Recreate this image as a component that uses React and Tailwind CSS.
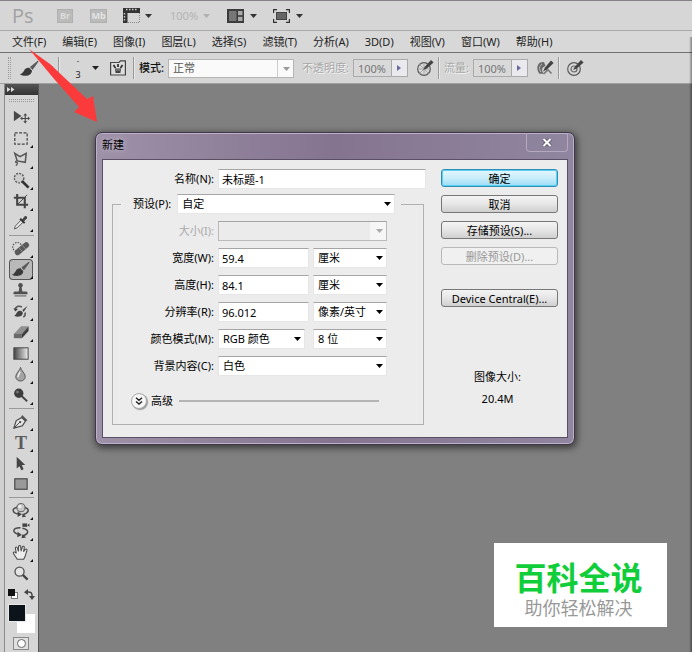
import { useState } from "react";

const menus = [
  "文件(F)", "编辑(E)", "图像(I)", "图层(L)", "选择(S)", "滤镜(T)",
  "分析(A)", "3D(D)", "视图(V)", "窗口(W)", "帮助(H)",
];

// Brush drawing, used in the options bar and the tool panel
const BrushShape = () => (
  <g>
    <path d="M19 1.5 L11 8 L13.5 11 L19.4 2.8 Z" fill="#5a5a5a" />
    <path d="M1 15.5 C3.5 14.5 4.5 12.8 5.5 10.8 C7 8.4 11 8 12.6 10.2 C13.8 12.6 12 15.4 9 16.4 C6.2 17.2 3.4 16.7 1 15.5 Z" fill="#3a3a3a" />
    <path d="M10.5 8.8 L13.4 11.4" stroke="#ddd" strokeWidth="1" />
  </g>
);

// Tool panel, grouped the way the separators split it
const toolGroups = [
  [
    {
      name: "移动工具", flyout: false,
      art: (
        <g>
          <path d="M3 3 L11 8.5 L3 14 Z" fill="#484848" />
          <path d="M15 7 v8 M11 11 h8" stroke="#484848" strokeWidth="1.2" />
          <path d="M15 5.6 l-2 2.4 h4 z M15 16.4 l-2 -2.4 h4 z M9.6 11 l2.4 -2 v4 z M20 11 l-2.2 -2 v4 z" fill="#484848" />
        </g>
      ),
    },
    {
      name: "选框工具", flyout: true,
      art: <rect x="4" y="4" width="13" height="12" fill="none" stroke="#444" strokeWidth="1.3" strokeDasharray="3 1.6" />,
    },
    {
      name: "套索工具", flyout: true,
      art: (
        <g fill="none" stroke="#555" strokeWidth="1.6">
          <path d="M4 3.5 L9.5 7 L16 3.5 L15 13 L6.5 11.5 Z" />
          <path d="M6.5 11.5 C4 11.5 4.5 14 6.5 13.2 C7.5 13.8 6.5 15.6 5 16.5" strokeWidth="1.2" />
        </g>
      ),
    },
    {
      name: "快速选择工具", flyout: true,
      art: (
        <g>
          <circle cx="8.5" cy="7.5" r="5" fill="#ccc" stroke="#555" strokeWidth="1.4" strokeDasharray="2 1.3" />
          <path d="M11.5 10.5 L18.5 17.5" stroke="#333" strokeWidth="2.8" />
        </g>
      ),
    },
    {
      name: "裁剪工具", flyout: true,
      art: (
        <g fill="none" stroke="#444">
          <path d="M6.5 2 V13.5 H18 M3 6 H14.5 V17" strokeWidth="2.2" />
          <path d="M7 13 L17 3" strokeWidth="1" />
        </g>
      ),
    },
    {
      name: "吸管工具", flyout: true,
      art: (
        <g>
          <path d="M10.5 7.5 L4.5 13.8 L3.5 16.8 L6.5 15.6 L12.8 9.6" fill="#e8e8e8" stroke="#555" strokeWidth="1" />
          <path d="M9.6 6 L14.4 10.6" stroke="#333" strokeWidth="2" />
          <path d="M11.5 7 L14.2 3.6 C15.5 2.2 17.8 4.2 16.6 5.8 L13.6 9 Z" fill="#444" />
        </g>
      ),
    },
  ],
  [
    {
      name: "修复画笔", flyout: true,
      art: (
        <g>
          <circle cx="6.6" cy="8.5" r="4.8" fill="none" stroke="#444" strokeWidth="1.1" strokeDasharray="1.6 1.2" />
          <path d="M7 14 L16 6.4" stroke="#5a5a5a" strokeWidth="6" strokeLinecap="round" />
          <path d="M8.6 9.6 L12.2 13.4 M12 6.8 L15.4 10.6" stroke="#a0a0a0" strokeWidth="0.8" />
        </g>
      ),
    },
    { name: "画笔工具", flyout: true, art: <BrushShape /> },
    {
      name: "仿制图章", flyout: true,
      art: (
        <g fill="#505050">
          <circle cx="10" cy="4.6" r="2.4" />
          <path d="M9 6 h2 l1 5 h4 q1.4 0 1.4 1.6 v1.4 h-14.8 v-1.4 q0 -1.6 1.4 -1.6 h4 z" />
          <rect x="3.8" y="15" width="12.4" height="1.4" fill="#777" />
        </g>
      ),
    },
    {
      name: "历史记录画笔", flyout: true,
      art: (
        <g>
          <path d="M17.5 4 L12 8.5 L13.3 10.5 Z" fill="#444" />
          <path d="M3.5 14.5 C5.5 14 6 9.5 9 9.3 C12 9 13.5 12 11.5 14 C9.5 16 5.5 15.8 3.5 14.5 Z" fill="#444" />
          <path d="M4.5 8.5 C4.5 4.6 8.5 3.4 11.5 5.4 M14.8 11 C15.4 13.5 14.5 15 13 16" fill="none" stroke="#555" strokeWidth="1.6" />
          <path d="M2.5 6.5 l2 3.5 l3 -2.6 z" fill="#444" />
        </g>
      ),
    },
    {
      name: "橡皮擦", flyout: true,
      art: (
        <g>
          <path d="M10.5 3.5 H18.5 L11.5 11.5 H3 Z" fill="#909090" />
          <path d="M3 11.5 H11.5 V16 H3 Z" fill="#6a6a6a" />
          <path d="M11.5 11.5 L18.5 3.5 V8.5 L11.5 16 Z" fill="#404040" />
        </g>
      ),
    },
    {
      name: "渐变工具", flyout: true,
      art: (
        <g>
          <defs>
            <linearGradient id="grad-tool">
              <stop offset="0" stopColor="#444" />
              <stop offset="1" stopColor="#eee" />
            </linearGradient>
          </defs>
          <rect x="3" y="4" width="15" height="12" fill="url(#grad-tool)" stroke="#444" />
        </g>
      ),
    },
    {
      name: "模糊工具", flyout: true,
      art: (
        <g>
          <path d="M10 2.5 C10.5 6 15 8.5 15 12.3 A5 4.6 0 0 1 5 12.3 C5 8.5 9.5 6 10 2.5 Z" fill="#a4a4a4" stroke="#555" strokeWidth="1" />
          <path d="M9.5 7 C9 9.5 7.2 10.5 7.4 13" fill="none" stroke="#eee" strokeWidth="1.6" />
        </g>
      ),
    },
    {
      name: "减淡工具", flyout: true,
      art: (
        <g>
          <path d="M10 9.5 L17 16" stroke="#444" strokeWidth="2" />
          <circle cx="8.2" cy="7.6" r="4.9" fill="#3e3e3e" />
          <circle cx="6.8" cy="6.4" r="1.5" fill="#777" />
        </g>
      ),
    },
  ],
  [
    {
      name: "钢笔工具", flyout: true,
      art: (
        <g>
          <path d="M3 17 L5.5 9 L11.5 5.8 L15.2 9.6 L12 14.6 Z" fill="#e4e4e4" stroke="#444" strokeWidth="1.2" />
          <path d="M3.5 16.5 L9 11" stroke="#444" strokeWidth="1" />
          <circle cx="9.6" cy="10.6" r="1.2" fill="#444" />
          <path d="M11.8 3.2 L17.4 8.6 L15.4 10 L10.6 5.2 Z" fill="#555" />
        </g>
      ),
    },
    {
      name: "文字工具", flyout: true,
      art: <text x="10.5" y="16.5" textAnchor="middle" fontFamily="Liberation Serif, serif" fontWeight="bold" fontSize="19" fill="#5c5c5c">T</text>,
    },
    {
      name: "路径选择工具", flyout: true,
      art: <path d="M6 3 L15 11.5 L11.3 11.7 L13.3 16 L10.8 17 L9 12.8 L6 15.2 Z" fill="#444" />,
    },
    {
      name: "矩形工具", flyout: true,
      art: <rect x="4" y="4" width="13" height="11" fill="#999" stroke="#444" strokeWidth="1.2" />,
    },
  ],
  [
    {
      name: "3D 旋转工具", flyout: true,
      art: (
        <g>
          <path d="M6.5 6.5 C0 8 1.5 13 8 13.6 M14 6.5 C20.5 8.5 18.5 12.5 13 14.2" fill="none" stroke="#4c4c4c" strokeWidth="1.6" />
          <circle cx="10.5" cy="7" r="4.3" fill="#c8c8c8" stroke="#555" strokeWidth="1" />
          <circle cx="9.4" cy="5.8" r="1.6" fill="#f2f2f2" />
          <path d="M7 11 L11.5 14 L7 16.8 Z M12 13 L16 16.5 L11.8 17.2 Z" fill="#444" />
        </g>
      ),
    },
    {
      name: "3D 相机工具", flyout: true,
      art: (
        <g>
          <rect x="12" y="1.5" width="5" height="3.6" fill="#444" />
          <path d="M17 3.3 l2.5 -1.6 v3.4 z" fill="#444" />
          <path d="M10 6 C2.5 5.5 0 10.5 7.5 13 M12 6.5 C20 8 18.5 12.6 12.5 14.5" fill="none" stroke="#4c4c4c" strokeWidth="1.6" />
          <path d="M7 10.2 L11.5 13.7 L6.6 16 Z M12 12.8 L16 16.2 L11 17 Z" fill="#444" />
        </g>
      ),
    },
    {
      name: "抓手工具", flyout: true,
      art: (
        <path
          d="M6.5 17 C5 14.5 2.6 12 2.4 10.4 C2.6 9 4.2 9.2 5.6 11 L4.6 5.4 C4.6 3.8 6.4 3.8 6.8 5.4 L7.8 8.8 L8 3.6 C8.2 2.2 10 2.2 10.2 3.6 L10.6 8.6 L12 4.2 C12.6 3 14.2 3.4 14 4.8 L13.2 9.2 L15 6.8 C16 5.8 17.2 6.6 16.8 7.8 C15.8 10 15.6 14 13.4 17 Z"
          fill="#ececec" stroke="#4c4c4c" strokeWidth="1.1"
        />
      ),
    },
    {
      name: "缩放工具", flyout: false,
      art: (
        <g>
          <circle cx="9" cy="8" r="4.8" fill="#e4e4e4" stroke="#555" strokeWidth="1.4" />
          <path d="M12.4 11.5 L17.5 16.5" stroke="#444" strokeWidth="2.4" />
        </g>
      ),
    },
  ],
];

const Caret = ({ className = "" }) => (
  <svg viewBox="0 0 7 4" className={`w-[7px] h-1 ${className}`} aria-hidden="true">
    <path d="M0 0 H7 L3.5 4 Z" fill="currentColor" />
  </svg>
);

const Divider = () => <span className="w-px h-[22px] bg-[#999] border-r border-[#e8e8e8] box-content" />;

// Target with a stylus, the tablet pressure buttons
const PressureIcon = ({ grid }) => (
  <svg viewBox="0 0 18 18" className="w-[18px] h-[18px]" aria-hidden="true">
    <circle cx="8" cy="10" r="6.3" fill="#d8d8d8" stroke="#5a5a5a" strokeWidth="1.2" />
    {grid ? (
      <path d="M3.5 5.5 L12.5 14.5 M3.5 14.5 L11 7 M8 4 V16 M2 10 H14" stroke="#aaa" strokeWidth="1" />
    ) : (
      <circle cx="8" cy="10" r="3" fill="none" stroke="#666" strokeWidth="1.2" />
    )}
    <path d="M7 11 L9 7.5 L15 1 L17.6 3.4 L10.8 9.4 Z" fill="#444" />
  </svg>
);

const PercentField = ({ id, label }) => (
  <div className="flex items-center">
    <label htmlFor={id} className="text-[#a9a9a9] whitespace-nowrap [text-shadow:1px_1px_0_#f4f4f4]">{label}</label>
    <input id={id} defaultValue="100%" disabled className="ml-1 w-[39px] h-[18px] pl-1 border border-[#aaa] bg-[#d9d9d9] text-[#777]" />
    <button type="button" aria-label={label} className="w-4 h-[18px] flex items-center justify-center border border-l-0 border-[#aaa] bg-[#e9e9ee]">
      <svg viewBox="0 0 4 6" className="w-1 h-1.5"><path d="M0 0 L4 3 L0 6 Z" fill="#6a6aa0" /></svg>
    </button>
  </div>
);

// Drop-down of the dialog, with its own black arrow
const Dropdown = ({ id, label, options, className, disabled }) => (
  <div className={`relative ${className}`}>
    <select
      id={id}
      aria-label={label}
      disabled={disabled}
      className={`block w-full h-5 pl-1 appearance-none border border-t-[#a5a5a5] ${
        disabled ? "bg-[#ebebeb] border-[#bbb] opacity-100" : "bg-white border-[#e6e6e6]"
      }`}
    >
      {options.map((option) => (
        <option key={option}>{option}</option>
      ))}
    </select>
    {disabled && <span className="absolute right-px top-px w-4 h-[18px] bg-[#f6f6f6]" />}
    <Caret className={`absolute right-1 top-2 pointer-events-none ${disabled ? "text-[#aaa]" : "text-black"}`} />
  </div>
);

const Row = ({ id, label, muted, children }) => (
  <div className="flex items-center h-5">
    <label htmlFor={id} className={`w-[102px] mr-1 text-right whitespace-nowrap ${muted ? "text-[#aaa]" : ""}`}>{label}</label>
    {children}
  </div>
);

const inputStyle = "h-5 px-[3px] bg-white border border-[#e6e6e6] border-t-[#a5a5a5]";

const DialogButton = ({ children, primary, disabled, className = "" }) => {
  let look = "border-[#777] bg-linear-to-b from-[#f4f4f4] via-[#e6e6e6] to-[#cfcfcf]";
  if (primary) look = "border-[#2d8fb8] bg-linear-to-b from-[#e6f7fe] via-[#c9edfb] to-[#9bdcf6] shadow-[inset_0_0_0_1px_#5cd0f2]";
  if (disabled) look = "border-[#b9b9b9] bg-[#f0f0f0] text-[#999]";
  return (
    <button type="button" disabled={disabled} className={`h-[18px] rounded-[3px] border leading-none ${look} ${className}`}>
      {children}
    </button>
  );
};

const NewDocumentDialog = () => {
  const [name, setName] = useState("未标题-1");
  const [width, setWidth] = useState("59.4");
  const [height, setHeight] = useState("84.1");
  const [resolution, setResolution] = useState("96.012");

  return (
    <section
      role="dialog"
      aria-labelledby="dialog-title"
      className="absolute left-14 top-12 w-[480px] px-1.5 pb-1.5 rounded-[7px] border border-[#40384a] bg-[#85769a] bg-linear-to-r from-[#9d91a8] via-[#857490] to-[#9086a0] shadow-[inset_0_0_0_1px_#bdb1c7,1px_2px_7px_1px_rgba(0,0,0,0.55)] text-[11px] text-black"
    >
      {/* Title bar */}
      <header className="flex justify-between h-[26px]">
        <h2 id="dialog-title" className="pt-1 leading-4 [text-shadow:0_0_6px_#d8d0e0]">新建</h2>
        <button type="button" aria-label="关闭" className="w-[42px] h-[19px] flex items-center justify-center rounded-b border border-t-0 border-[#b3a8bd]">
          <svg viewBox="0 0 10 9" className="w-2.5 h-[9px]">
            <path d="M1.5 1 L8.5 8 M8.5 1 L1.5 8" stroke="#5c5168" strokeWidth="3.6" />
            <path d="M1.5 1 L8.5 8 M8.5 1 L1.5 8" stroke="#fff" strokeWidth="2" />
          </svg>
        </button>
      </header>

      <form className="flex justify-between px-[9px] pt-[9px] pb-3 border border-[#5b4f66] bg-[#ececec]">
        <div className="w-[314px]">
          <Row id="doc-name" label="名称(N):">
            <input id="doc-name" value={name} onChange={(e) => setName(e.target.value)} className={`w-[208px] ${inputStyle}`} />
          </Row>

          {/* Preset group */}
          <fieldset className="mt-[5px] w-[312px] min-w-0 border border-[#b0b0b0]">
            <legend className="ml-2 flex items-center pl-3 pr-1.5">
              <label htmlFor="preset" className="mr-1.5 whitespace-nowrap">预设(P):</label>
              <Dropdown id="preset" label="预设" options={["自定"]} className="w-[218px]" />
            </legend>

            <div className="-ml-px mt-[7px] flex flex-col gap-[7px]">
              <Row id="size" label="大小(I):" muted>
                <Dropdown id="size" label="大小" options={[""]} className="w-[169px]" disabled />
              </Row>
              <Row id="width" label="宽度(W):">
                <input id="width" value={width} onChange={(e) => setWidth(e.target.value)} className={`w-[91px] mr-1 ${inputStyle}`} />
                <Dropdown id="width-unit" label="宽度单位" options={["厘米", "像素"]} className="w-[74px]" />
              </Row>
              <Row id="height" label="高度(H):">
                <input id="height" value={height} onChange={(e) => setHeight(e.target.value)} className={`w-[91px] mr-1 ${inputStyle}`} />
                <Dropdown id="height-unit" label="高度单位" options={["厘米", "像素"]} className="w-[74px]" />
              </Row>
              <Row id="resolution" label="分辨率(R):">
                <input id="resolution" value={resolution} onChange={(e) => setResolution(e.target.value)} className={`w-[91px] mr-1 ${inputStyle}`} />
                <Dropdown id="resolution-unit" label="分辨率单位" options={["像素/英寸", "像素/厘米"]} className="w-[74px]" />
              </Row>
              <Row id="mode" label="颜色模式(M):">
                <Dropdown id="mode" label="颜色模式" options={["RGB 颜色", "灰度"]} className="w-[87px] mr-2" />
                <Dropdown id="depth" label="位深度" options={["8 位", "16 位"]} className="w-[74px]" />
              </Row>
              <Row id="background" label="背景内容(C):">
                <Dropdown id="background" label="背景内容" options={["白色", "透明"]} className="w-[169px]" />
              </Row>
            </div>

            {/* Advanced toggle */}
            <div className="flex items-center mt-[17px] mb-[15px] ml-[18px] mr-11">
              <button type="button" aria-label="高级" className="w-4 h-4 rounded-full border border-[#aaa] bg-[#f6f6f6] shadow-[1px_1px_1px_#999] flex items-center justify-center">
                <svg viewBox="0 0 8 8" className="w-2 h-2" fill="none" stroke="#222" strokeWidth="1.4">
                  <path d="M1 0.8 L4 3.3 L7 0.8 M1 4.5 L4 7 L7 4.5" />
                </svg>
              </button>
              <span className="ml-1 mr-1.5">高级</span>
              <span className="flex-1 h-0.5 bg-[#b4b4b4]" />
            </div>
          </fieldset>
        </div>

        {/* Action buttons */}
        <div className="w-[117px] flex flex-col gap-2">
          <DialogButton primary>确定</DialogButton>
          <DialogButton>取消</DialogButton>
          <DialogButton>存储预设(S)...</DialogButton>
          <DialogButton disabled>删除预设(D)...</DialogButton>
          <DialogButton className="mt-4 whitespace-nowrap">Device Central(E)...</DialogButton>
          <div className="mt-[51px] pr-1 text-center leading-[22px]">
            <p>图像大小:</p>
            <p>20.4M</p>
          </div>
        </div>
      </form>
    </section>
  );
};

const ToolPanel = () => {
  const [active, setActive] = useState("画笔工具");

  return (
    <aside className="w-[35px] shrink-0 border-x border-[#8b8b8b] border-r-[#555] bg-[#d6d6d6]">
      <div className="h-[11px] flex items-center pl-0.5 bg-linear-to-b from-[#555] to-[#333]">
        <svg viewBox="0 0 8 5" className="w-2 h-[5px]"><path d="M0 0 L3.5 2.5 L0 5 Z M4 0 L7.5 2.5 L4 5 Z" fill="#ddd" /></svg>
      </div>
      <div className="mx-1 mt-1 mb-[5px] h-[3px] border-y border-dotted border-[#999]" />

      {toolGroups.map((group, index) => (
        <div key={index} className={index > 0 ? "mx-1 mt-0.5 pt-0.5 border-t border-[#999]" : "mx-1"}>
          {group.map((tool) => (
            <button
              key={tool.name}
              type="button"
              aria-label={tool.name}
              onClick={() => setActive(tool.name)}
              className={`relative block w-6 h-[21px] pl-0.5 ${
                active === tool.name ? "rounded-sm bg-[#b9b9b9] shadow-[inset_0_0_0_1px_#555]" : ""
              }`}
            >
              <svg viewBox="0 0 20 20" className="w-[19px] h-[19px]">{tool.art}</svg>
              {tool.flyout && (
                <svg viewBox="0 0 3 3" className="absolute right-0 bottom-px w-[3px] h-[3px]"><path d="M3 0 V3 H0 Z" fill="#111" /></svg>
              )}
            </button>
          ))}
        </div>
      ))}

      {/* Default / swap colours */}
      <div className="flex justify-between items-center px-[3px] mt-1 h-3">
        <svg viewBox="0 0 10 10" className="w-2.5 h-2.5">
          <rect x="3.5" y="3.5" width="6" height="6" fill="#fff" stroke="#777" />
          <rect x="0" y="0" width="7" height="7" fill="#111" />
        </svg>
        <svg viewBox="0 0 11 11" className="w-[11px] h-[11px]">
          <path d="M3 3 C7 2.5 8.5 4 8 8" fill="none" stroke="#444" strokeWidth="1.5" />
          <path d="M0 3.2 L4 0 V6 Z M8 11 L5 7 H11 Z" fill="#444" />
        </svg>
      </div>
      <div className="relative mx-[3px] mt-1 h-[29px]">
        <span className="absolute right-0 bottom-0 w-[18px] h-[19px] bg-white" />
        <span className="absolute left-0 top-0 w-[18px] h-[18px] bg-[#0d131b] border border-[#e8e8e8]" />
      </div>
      <button type="button" aria-label="快速蒙版" className="mt-1 ml-2 w-4 h-[13px] flex items-center justify-center border border-[#888] bg-[#e0e0e0]">
        <span className="w-[9px] h-[9px] rounded-full border border-[#666] bg-white" />
      </button>
    </aside>
  );
};

const App = () => (
  <div className="relative h-screen overflow-hidden flex flex-col border-t border-[#858085] bg-[#808080] font-['Noto_Sans','Noto_Sans_CJK_SC',sans-serif] text-[11px] leading-4 text-[#222]">
    {/* Application bar */}
    <div className="h-[30px] shrink-0 flex items-center pl-3 bg-[#d6d6d6] border-b border-[#aaa]">
      <span className="w-[45px] text-xl text-[#a2a2a2] font-['Open_Sans',sans-serif]">Ps</span>
      <span className="w-4 h-3.5 mr-[17px] bg-[#bbb] border border-[#b0b0b0] text-[9px] leading-3 text-center text-[#ddd] font-bold">Br</span>
      <span className="w-[17px] h-3.5 mr-4 bg-[#bbb] border border-[#b0b0b0] text-[9px] leading-3 text-center text-[#e4e4e4] font-bold">Mb</span>
      <svg viewBox="0 0 18 15" className="w-[18px] h-[15px] mr-1">
        <rect x="0" y="0" width="17" height="5" fill="#333" />
        <rect x="0" y="0" width="4.5" height="15" fill="#333" />
        <path d="M3 1.5 h12" stroke="#ccc" strokeDasharray="1.5 1.5" strokeWidth="1.6" />
        <path d="M1.5 5 v9" stroke="#ccc" strokeDasharray="1.5 1.5" strokeWidth="1.4" />
        <path d="M16.5 5 V14.5 H4.5" fill="none" stroke="#888" strokeDasharray="1 1" />
      </svg>
      <Caret className="text-[#333] mr-[18px]" />
      <span className="w-[33px] text-[#b4b4b4]">100%</span>
      <Caret className="text-[#b0b0b0] mr-[17px]" />
      <svg viewBox="0 0 17 14" className="w-[17px] h-3.5 mr-1.5">
        <rect x="0" y="0" width="17" height="14" fill="#3c3c3c" />
        <rect x="2" y="2" width="7.5" height="10" fill="#777" />
        <rect x="11" y="2" width="4.5" height="4.2" fill="#aaa" />
        <rect x="11" y="7.8" width="4.5" height="4.2" fill="#aaa" />
      </svg>
      <Caret className="text-[#333] mr-4" />
      <svg viewBox="0 0 17 14" className="w-[17px] h-3.5 mr-1.5">
        <path d="M0.6 4 V0.6 H4 M13 0.6 H16.4 V4 M16.4 10 V13.4 H13 M4 13.4 H0.6 V10" fill="none" stroke="#333" strokeWidth="1.2" />
        <rect x="3" y="3" width="11" height="8" fill="#444" />
        <rect x="4" y="4" width="9" height="6" fill="#666" />
      </svg>
      <Caret className="text-[#333]" />
    </div>

    {/* Menu bar */}
    <nav className="h-[22px] shrink-0 flex items-center gap-4 pl-3 bg-[#d8d8d8] border-b border-[#707070]">
      {menus.map((menu) => (
        <button key={menu} type="button" className="whitespace-nowrap">{menu}</button>
      ))}
    </nav>

    {/* Brush options */}
    <div className="h-[31px] shrink-0 flex items-center pl-2 bg-[#d6d6d6] border-b border-[#a0a0a0]">
      <span className="w-[3px] h-[22px] mr-2 border-x border-dotted border-[#999]" />
      <svg viewBox="0 0 20 18" className="w-5 h-[18px] mr-[7px]"><BrushShape /></svg>
      <Caret className="text-[#555] mr-[5px]" />
      <Divider />
      <div className="w-8 pl-1 text-[9px] leading-[13px] text-center text-[#222]">
        <div>·</div>
        <div>3</div>
      </div>
      <Caret className="text-[#222] mr-[11px]" />
      <svg viewBox="0 0 16 16" className="w-4 h-4 mr-[7px]">
        <path d="M0.6 15 V2.5 H9 L10.5 0.8 H15.4 V15 Z" fill="#ddd" stroke="#444" strokeWidth="1.2" />
        <path d="M3.5 5 l2 3 M8 4 v3 M12.5 5 l-2 3" stroke="#333" strokeWidth="1.8" />
        <path d="M5 8.5 H11 L10.4 13 H5.6 Z" fill="#444" />
        <path d="M6.5 10 h1 M8.5 10 h1" stroke="#eee" />
      </svg>
      <Divider />
      <label htmlFor="blend" className="ml-1 mr-1 font-medium text-[#111] whitespace-nowrap">模式:</label>
      <div className="relative w-[126px] mr-2">
        <select id="blend" className="block w-full h-[19px] pl-1 appearance-none bg-[#fafafa] border border-[#b5b5b5] text-[#555]">
          <option>正常</option>
        </select>
        <span className="absolute right-4 top-px w-px h-[17px] bg-[#ccc]" />
        <Caret className="absolute right-1 top-2 text-[#999] pointer-events-none" />
      </div>
      <PercentField id="opacity" label="不透明度:" />
      <button type="button" aria-label="不透明度压力" className="ml-2 mr-1"><PressureIcon grid /></button>
      <Divider />
      <span className="w-1" />
      <PercentField id="flow" label="流量:" />
      <button type="button" aria-label="喷枪" className="ml-2 mr-1">
        <svg viewBox="0 0 18 18" className="w-[18px] h-[18px]">
          <path d="M8 3 C1 2 -0.5 10 3.5 14.8 H8 C5 11.5 5.5 8.5 9.5 7 Z" fill="#6a6a6a" />
          <path d="M6 5 C3 6.5 3 10.5 5 13" fill="none" stroke="#bbb" strokeWidth="1" />
          <path d="M7 12.5 L9 8.5 L15 1.5 L17.6 4 L11 10.6 Z" fill="#444" />
          <path d="M7.5 15 L12 10.8 L15.5 14.5" fill="none" stroke="#777" strokeWidth="1.6" />
        </svg>
      </button>
      <Divider />
      <button type="button" aria-label="大小压力" className="ml-1.5"><PressureIcon /></button>
    </div>

    <div className="flex flex-1 min-h-0">
      <div className="w-1 shrink-0 bg-[#d0d0d0]" />
      <ToolPanel />
      <main className="relative flex-1 bg-[#808080]">
        <NewDocumentDialog />
      </main>
    </div>

    {/* Red pointer from the file menu to the dialog */}
    <svg viewBox="0 0 70 75" className="absolute left-7 top-12 w-[70px] h-[75px] pointer-events-none" aria-hidden="true">
      <path d="M1 0 L22 15 L59 50 L65 47 L69 73 L46 63 L51 58 L27 31 Z" fill="#fb3b3b" />
    </svg>

    {/* Site badge */}
    <div className="absolute right-[25px] bottom-[25px] w-[173px] h-[84px] pt-3 pr-1 bg-white text-center font-['Noto_Sans_CJK_SC',sans-serif]">
      <p className="text-[32px] leading-[42px] font-bold text-[#0fce3a]">百科全说</p>
      <p className="text-lg leading-5 text-[#999]">助你轻松解决</p>
    </div>
    <div className="absolute right-0 top-9 bottom-0 w-[3px] bg-linear-to-r from-transparent to-black/40" />
  </div>
);

export default App;
